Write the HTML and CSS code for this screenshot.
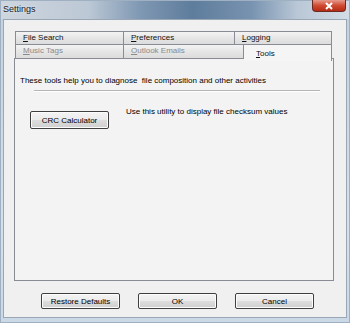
FILE: index.html
```html
<!DOCTYPE html>
<html lang="en">
<head>
    <link rel="stylesheet" href="styles.css">
    <title>Settings</title>
</head>
<body>
    <div class="window">
        <div class="titlebar">
            <span class="title">Settings</span>
            <span class="close">
                <svg width="10" height="8" viewBox="0 0 10 8">
                    <path d="M2 1 L8 7 M8 1 L2 7" stroke="#fff" stroke-width="2"/>
                </svg>
            </span>
        </div>

        <div class="client">
            <div class="tabs">
                <div class="tab-row">
                    <div class="tab w1"><u>F</u>ile Search</div>
                    <div class="tab w2"><u>P</u>references</div>
                    <div class="tab w3"><u>L</u>ogging</div>
                </div>
                <div class="tab-row">
                    <div class="tab back w1"><u>M</u>usic Tags</div>
                    <div class="tab back w4"><u>O</u>utlook Emails</div>
                    <div class="tab selected"><u>T</u>ools</div>
                </div>
                <div class="panel">
                    <p class="intro">These tools help you to diagnose&nbsp; file composition and other activities</p>
                    <div class="separator"></div>
                    <div class="tool">
                        <button type="button" class="btn crc">CRC Calculator</button>
                        <span class="tool-text">Use this utility to display file checksum values</span>
                    </div>
                </div>
            </div>

            <div class="actions">
                <button type="button" class="btn">Restore Defaults</button>
                <button type="button" class="btn">OK</button>
                <button type="button" class="btn">Cancel</button>
            </div>
        </div>
    </div>
</body>
</html>
```

FILE: styles.css
```css
body {
    margin: 0;
    font-family: "Liberation Sans", Arial, sans-serif;
    font-size: 8px;
    color: #000;
}

.window {
    width: 350px;
    height: 323px;
    display: flex;
    flex-direction: column;
    background: linear-gradient(to bottom, #c3d0de, #d6e0ea 70%, #cbd8e6);
    box-sizing: border-box;
    border: 1px solid #9fb0c3;
}

.titlebar {
    height: 18px;
    display: flex;
    align-items: flex-start;
    justify-content: space-between;
    padding-left: 2px;
    background: linear-gradient(to right, #ced6df 0%, #bcc8d5 25%, #7f98b3 40%, #5e7c9c 55%, #7893b0 72%, #b9c7d6 85%, #d3dce6 100%);
}

.title {
    font-size: 9px;
    line-height: 9px;
    margin-top: 4px;
    color: #1c1c1c;
    text-shadow: 0 0 3px #e8eef4;
}

.close {
    width: 32px;
    height: 11px;
    margin-right: 3px;
    margin-top: -1px;
    display: flex;
    align-items: center;
    justify-content: center;
    background: linear-gradient(to bottom, #e69a8c, #cf4b32 50%, #b52b15);
    border: 1px solid #6f2a20;
    border-top: none;
    border-radius: 0 0 4px 4px;
}

.client {
    flex: 1;
    margin: 0 2px 4px 2px;
    background: #f0f0f0;
    border: 1px solid #98a6b5;
    padding: 11px 12px 0 10px;
    display: flex;
    flex-direction: column;
}

.tabs {
    display: flex;
    flex-direction: column;
}

.tab-row {
    display: flex;
    padding-left: 1px;
}

.tab {
    height: 13px;
    box-sizing: border-box;
    padding-left: 7px;
    line-height: 12px;
    border: 1px solid #898c95;
    border-bottom: none;
    border-left: none;
    background: linear-gradient(to bottom, #f3f3f3, #e6e6e6 50%, #dcdcdc);
    color: #111;
}

.tab:first-child {
    border-left: 1px solid #898c95;
}

.back {
    color: #8a8a8a;
    height: 14px;
}

.w1 { width: 109px; }
.w2 { width: 111px; }
.w3 { width: 97px; }
.w4 { width: 120px; }

.selected {
    width: 88px;
    height: 17px;
    padding-left: 12px;
    padding-top: 3px;
    line-height: 12px;
    margin-bottom: -3px;
    background: #f5f5f5;
    position: relative;
    z-index: 1;
}

.panel {
    height: 223px;
    box-sizing: border-box;
    border: 1px solid #898c95;
    background: #f3f3f3;
    padding: 17px 0 0 5px;
}

.intro {
    margin: 0;
    line-height: 10px;
}

.separator {
    height: 1px;
    background: #b5b5b5;
    margin: 4px 13px 0 14px;
    border-bottom: 1px solid #fff;
}

.tool {
    display: flex;
    align-items: flex-start;
    margin-top: 13px;
    padding-left: 10px;
}

.tool-text {
    margin-left: 17px;
    margin-top: 2px;
}

.btn {
    width: 79px;
    height: 16px;
    padding: 0;
    font-family: "Liberation Sans", Arial, sans-serif;
    font-size: 8px;
    color: #000;
    border: 1px solid #3f3f3f;
    border-radius: 2px;
    background: linear-gradient(to bottom, #f4f4f4, #ebebeb 48%, #dddddd 52%, #cfcfcf);
    box-shadow: inset 0 0 0 1px #fcfcfc;
}

.crc {
    height: 18px;
    margin-top: 6px;
}

.actions {
    display: flex;
    gap: 18px;
    padding-left: 27px;
    margin-top: 12px;
}
```
